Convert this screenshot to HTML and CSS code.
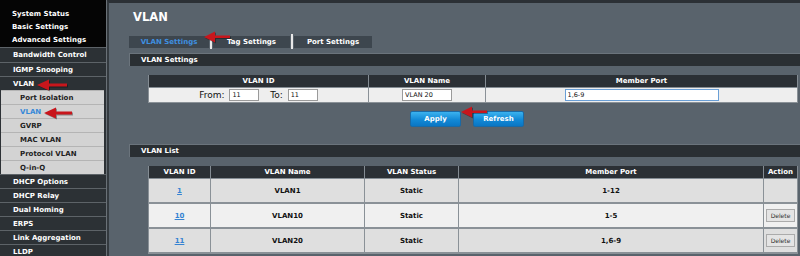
FILE: index.html
```html
<!DOCTYPE html>
<html lang="en">
<head>
  <meta charset="UTF-8">
  <title>VLAN</title>
  <link rel="stylesheet" href="styles.css">
</head>
<body>

  <aside class="sidebar">
    <div class="top-menu">
      <div class="top-item">System Status</div>
      <div class="top-item">Basic Settings</div>
      <div class="top-item">Advanced Settings</div>
    </div>
    <ul class="menu">
      <li>Bandwidth Control</li>
      <li>IGMP Snooping</li>
      <li>VLAN</li>
    </ul>
    <ul class="submenu">
      <li>Port Isolation</li>
      <li class="active">VLAN</li>
      <li>GVRP</li>
      <li>MAC VLAN</li>
      <li>Protocol VLAN</li>
      <li>Q-in-Q</li>
    </ul>
    <ul class="menu">
      <li>DHCP Options</li>
      <li>DHCP Relay</li>
      <li>Dual Homing</li>
      <li>ERPS</li>
      <li>Link Aggregation</li>
      <li>LLDP</li>
    </ul>
  </aside>

  <main class="content">
    <h1 class="title">VLAN</h1>

    <div class="tabs">
      <span class="tab tab-active">VLAN Settings</span>
      <span class="tab-sep"></span>
      <span class="tab">Tag Settings</span>
      <span class="tab-sep"></span>
      <span class="tab">Port Settings</span>
    </div>

    <div class="section-bar">VLAN Settings</div>

    <table class="grid settings">
      <tr>
        <th class="c-id">VLAN ID</th>
        <th class="c-name">VLAN Name</th>
        <th>Member Port</th>
      </tr>
      <tr>
        <td class="range">
          From: <input type="text" class="small" value="11">
          <span class="to">To:</span> <input type="text" class="small" value="11">
        </td>
        <td><input type="text" class="name" value="VLAN 20"></td>
        <td><input type="text" class="ports" value="1,6-9"></td>
      </tr>
    </table>

    <div class="buttons">
      <button class="btn">Apply</button>
      <button class="btn">Refresh</button>
    </div>

    <div class="section-bar">VLAN List</div>

    <table class="grid list">
      <tr>
        <th class="l-id">VLAN ID</th>
        <th class="l-name">VLAN Name</th>
        <th class="l-status">VLAN Status</th>
        <th>Member Port</th>
        <th class="l-action">Action</th>
      </tr>
      <tr class="odd">
        <td><a href="#">1</a></td>
        <td>VLAN1</td>
        <td>Static</td>
        <td>1-12</td>
        <td></td>
      </tr>
      <tr class="even">
        <td><a href="#">10</a></td>
        <td>VLAN10</td>
        <td>Static</td>
        <td>1-5</td>
        <td><button class="del">Delete</button></td>
      </tr>
      <tr class="odd">
        <td><a href="#">11</a></td>
        <td>VLAN20</td>
        <td>Static</td>
        <td>1,6-9</td>
        <td><button class="del">Delete</button></td>
      </tr>
    </table>
  </main>

  <!-- red annotation arrows -->
  <svg class="arrow arrow-menu" width="32" height="12" viewBox="0 0 32 12"><path d="M12 4.5 H31 V7.5 H12 Z M1 6 L13 0.5 L13 11.5 Z" fill="#c8161c"/></svg>
  <svg class="arrow arrow-sub" width="30" height="12" viewBox="0 0 30 12"><path d="M12 4.5 H29 V7.5 H12 Z M1 6 L13 0.5 L13 11.5 Z" fill="#c8161c"/></svg>
  <svg class="arrow arrow-tab" width="28" height="12" viewBox="0 0 28 12"><path d="M11 4.5 H27 V7 H11 Z M1 6 L12 0.5 L12 11.5 Z" fill="#c8161c"/></svg>
  <svg class="arrow arrow-apply" width="28" height="12" viewBox="0 0 28 12"><path d="M11 4.5 H27 V7 H11 Z M1 6 L12 0.5 L12 11.5 Z" fill="#c8161c"/></svg>

</body>
</html>
```

FILE: styles.css
```css
body {
  margin: 0;
  width: 800px;
  height: 256px;
  overflow: hidden;
  display: flex;
  font-family: 'DejaVu Sans', Verdana, sans-serif;
  font-size: 7px;
  font-weight: bold;
  background-color: #59636c;
  position: relative;
}

/* sidebar */
.sidebar {
  width: 106px;
  flex-shrink: 0;
  background-color: #2c3135;
  border-right: 1px solid #6a7177;
  color: #fff;
}

.top-menu {
  background-color: #050505;
  height: 47px;
  padding-top: 8px;
  box-sizing: border-box;
}

.top-item {
  height: 13px;
  line-height: 13px;
  padding-left: 12px;
}

.menu, .submenu {
  list-style: none;
  margin: 0;
  padding: 0;
}

.menu li {
  height: 14px;
  line-height: 14px;
  padding-left: 13px;
  border-top: 1px solid #5d6368;
  box-sizing: border-box;
}

.menu:first-of-type li:first-child {
  height: 15px;
}

.submenu {
  background-color: #d3d3d3;
  margin: 0 2px 0 1px;
  color: #1e1e1e;
}

.submenu li {
  height: 14px;
  line-height: 14px;
  padding-left: 19px;
  border-top: 1px solid #b4b4b4;
  box-sizing: border-box;
}

.submenu li.active {
  color: #3789d8;
}

/* main */
.content {
  flex: 1;
  border-top: 3px solid #2b3035;
  border-left: 2px solid #343a3f;
  padding-left: 20px;
  color: #fff;
}

.title {
  font-size: 11.5px;
  margin: 7px 0 0 4px;
  height: 14px;
  line-height: 14px;
}

.tabs {
  display: flex;
  align-items: center;
  margin-top: 10px;
  height: 15px;
}

.tab {
  background-color: #3d464e;
  height: 12px;
  line-height: 12px;
  text-align: center;
}

.tab:nth-child(1) { width: 80px; color: #3f90e0; }
.tab:nth-child(3) { width: 77px; }
.tab:nth-child(5) { width: 78px; }

.tab-sep {
  width: 2px;
  height: 15px;
  background-color: #e8e8e8;
  margin: 0 1px 0 1px;
}

.section-bar {
  margin-top: 4px;
  height: 12px;
  line-height: 12px;
  background-color: #2a2f33;
  border-top: 1px solid #6b747c;
  border-left: 1px solid #6b747c;
  padding-left: 11px;
}

.grid {
  border-collapse: collapse;
  margin: 9px 0 0 19px;
  width: 650px;
  font-size: 7px;
}

.grid th {
  background-color: #2b3035;
  color: #fff;
  height: 12px;
  padding: 0;
  border: 1px solid #848c93;
  border-top: none;
}

.grid td {
  border: 1px solid #8a9197;
  padding: 0;
  text-align: center;
  color: #111;
}

.settings td {
  background-color: #eeeeee;
  height: 14px;
  font-weight: normal;
  font-size: 9px;
}

.c-id { width: 219px; }
.c-name { width: 116px; }

.range .to {
  margin-left: 8px;
}

input {
  font-family: 'DejaVu Sans', Verdana, sans-serif;
  font-size: 6.5px;
  height: 12px;
  box-sizing: border-box;
  border: 1px solid #9a9a9a;
  padding: 0 2px;
  margin: 0;
  vertical-align: middle;
  background-color: #fff;
  color: #111;
}

input.small { width: 30px; margin-left: 2px; }
input.name { width: 50px; }
input.ports { width: 154px; border-color: #6a9fd6; }

.buttons {
  display: flex;
  gap: 12px;
  margin: 8px 0 0 281px;
}

.btn {
  width: 51px;
  height: 16px;
  border: 1px solid #1a6aa6;
  border-radius: 2px;
  background: linear-gradient(#3bb2ef, #1289d6 55%, #0a76c4);
  color: #fff;
  font-family: 'DejaVu Sans', Verdana, sans-serif;
  font-size: 7px;
  font-weight: bold;
  padding: 0;
}

.buttons + .section-bar {
  margin-top: 17px;
}

.list td {
  height: 23px;
  border-width: 1px 1px 2px 1px;
}

.list tr.odd td { background-color: #dfdfdf; }
.list tr.even td { background-color: #f0f0f0; }

.l-id { width: 61px; }
.l-name { width: 153px; }
.l-status { width: 93px; }
.l-action { width: 33px; }

.list a {
  color: #3683d2;
}

.del {
  font-family: 'DejaVu Sans', Verdana, sans-serif;
  font-size: 6px;
  font-weight: normal;
  color: #333;
  background-color: #e4e4e4;
  border: 1px solid #ababab;
  width: 29px;
  height: 13px;
  padding: 0;
}

/* annotation arrows */
.arrow {
  position: absolute;
  filter: drop-shadow(1px 1px 0 rgba(0, 0, 0, 0.35));
}

.arrow-menu { left: 36px; top: 79px; }
.arrow-sub { left: 43px; top: 107px; }
.arrow-tab { left: 203px; top: 31px; }
.arrow-apply { left: 460px; top: 106px; }
```
